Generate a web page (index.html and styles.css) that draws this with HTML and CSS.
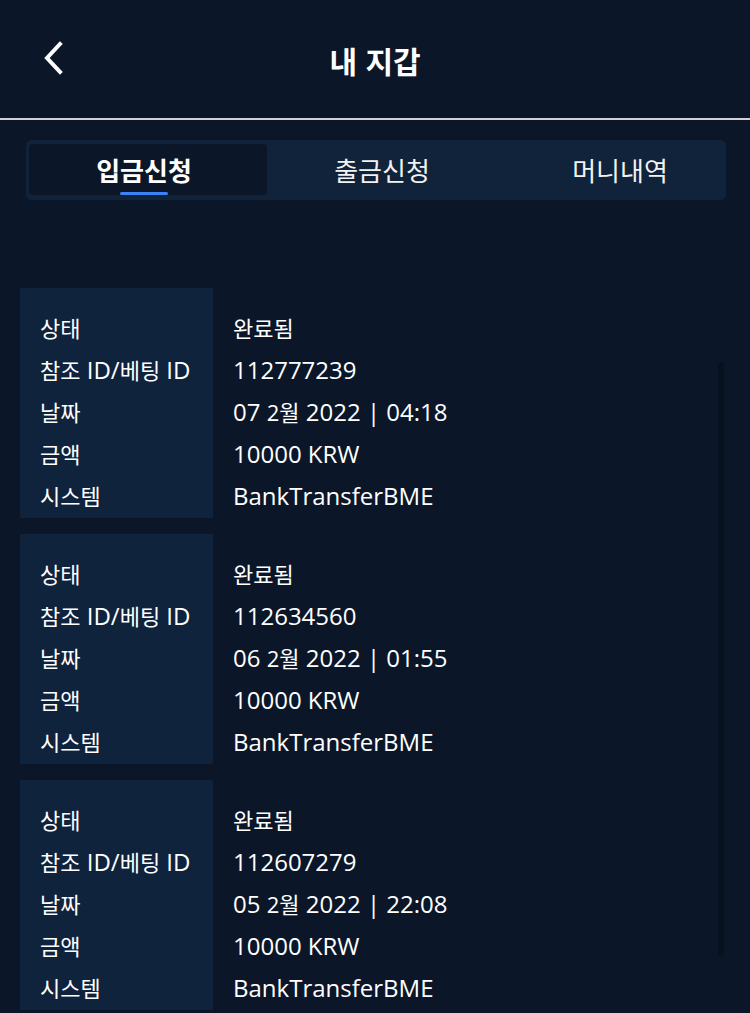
FILE: index.html
```html
<!DOCTYPE html>
<html lang="ko">
<head>
    <meta charset="UTF-8">
    <meta name="viewport" content="width=device-width, initial-scale=1.0">
    <title>내 지갑</title>
    <link rel="stylesheet" href="styles.css">
</head>
<body>
    <div id="header">
        <a href="#" class="backBtn">
            <svg width="24" height="34" viewBox="0 0 24 34">
                <path d="M19 3 L6 17 L19 31" fill="none" stroke="#fff" stroke-width="4" stroke-linecap="square"/>
            </svg>
        </a>
        <h1 class="title">내 지갑</h1>
    </div>

    <div id="tabs">
        <div class="tab active"><span class="label">입금신청</span><span class="bar"></span></div>
        <div class="tab"><span class="label">출금신청</span></div>
        <div class="tab"><span class="label">머니내역</span></div>
    </div>

    <div id="list">
        <div class="card">
            <div class="labels">
                <div class="ko">상태</div>
                <div><span class="ko">참조</span> ID/<span class="ko">베팅</span> ID</div>
                <div class="ko">날짜</div>
                <div class="ko">금액</div>
                <div class="ko">시스템</div>
            </div>
            <div class="values">
                <div class="ko">완료됨</div>
                <div>112777239</div>
                <div>07 <span class="ko">2월</span> 2022 | 04:18</div>
                <div>10000 KRW</div>
                <div>BankTransferBME</div>
            </div>
        </div>
        <div class="card">
            <div class="labels">
                <div class="ko">상태</div>
                <div><span class="ko">참조</span> ID/<span class="ko">베팅</span> ID</div>
                <div class="ko">날짜</div>
                <div class="ko">금액</div>
                <div class="ko">시스템</div>
            </div>
            <div class="values">
                <div class="ko">완료됨</div>
                <div>112634560</div>
                <div>06 <span class="ko">2월</span> 2022 | 01:55</div>
                <div>10000 KRW</div>
                <div>BankTransferBME</div>
            </div>
        </div>
        <div class="card">
            <div class="labels">
                <div class="ko">상태</div>
                <div><span class="ko">참조</span> ID/<span class="ko">베팅</span> ID</div>
                <div class="ko">날짜</div>
                <div class="ko">금액</div>
                <div class="ko">시스템</div>
            </div>
            <div class="values">
                <div class="ko">완료됨</div>
                <div>112607279</div>
                <div>05 <span class="ko">2월</span> 2022 | 22:08</div>
                <div>10000 KRW</div>
                <div>BankTransferBME</div>
            </div>
        </div>
        <div class="scrollbar"></div>
    </div>
</body>
</html>
```

FILE: styles.css
```css
body {
    margin: 0;
    padding: 0;
    background-color: #0b1729;
    color: #fff;
    font-family: 'Open Sans', 'Noto Sans CJK KR', sans-serif;
    height: 1013px;
    overflow: hidden;
}

#header {
    height: 118px;
    border-bottom: 2px solid #d2d2d2;
    display: flex;
    align-items: center;
    justify-content: center;
    position: relative;
}

.backBtn {
    position: absolute;
    left: 41px;
    top: 41px;
    display: block;
    line-height: 0;
}

.title {
    margin: 0;
    font-size: 30px;
    font-weight: bold;
    font-family: 'Noto Sans CJK KR', sans-serif;
    padding-top: 2px;
}

#tabs {
    margin: 20px 24px 0 26px;
    height: 60px;
    box-sizing: border-box;
    padding: 4px 3px 5px 3px;
    background-color: #11223b;
    border-radius: 6px;
    display: flex;
}

.tab {
    flex: 0 0 238px;
    box-sizing: border-box;
    padding-right: 8px;
    display: flex;
    align-items: center;
    justify-content: center;
    font-family: 'Noto Sans CJK KR', sans-serif;
    font-size: 26px;
    color: #f2f2f2;
    border-radius: 4px;
    position: relative;
}

.tab.active {
    background-color: #0b1729;
    font-weight: bold;
    color: #fff;
}

.tab .bar {
    position: absolute;
    bottom: 0;
    left: 50%;
    margin-left: -28px;
    width: 48px;
    height: 3px;
    border-radius: 2px;
    background-color: #3b82f6;
}

#list {
    margin-top: 88px;
    padding: 0 20px;
    display: flex;
    flex-direction: column;
    gap: 16px;
    position: relative;
}

.card {
    display: flex;
    height: 230px;
    font-size: 24px;
}

.labels {
    width: 193px;
    box-sizing: border-box;
    background-color: #10233d;
    padding: 19px 0 0 20px;
}

.values {
    padding: 19px 0 0 20px;
}

.labels div, .values div {
    height: 42px;
    line-height: 42px;
    white-space: nowrap;
}

.ko {
    font-size: 22px;
}

.scrollbar {
    position: absolute;
    left: 718px;
    top: 74px;
    width: 6px;
    height: 594px;
    border-radius: 3px;
    background-color: #08121f;
}
```
